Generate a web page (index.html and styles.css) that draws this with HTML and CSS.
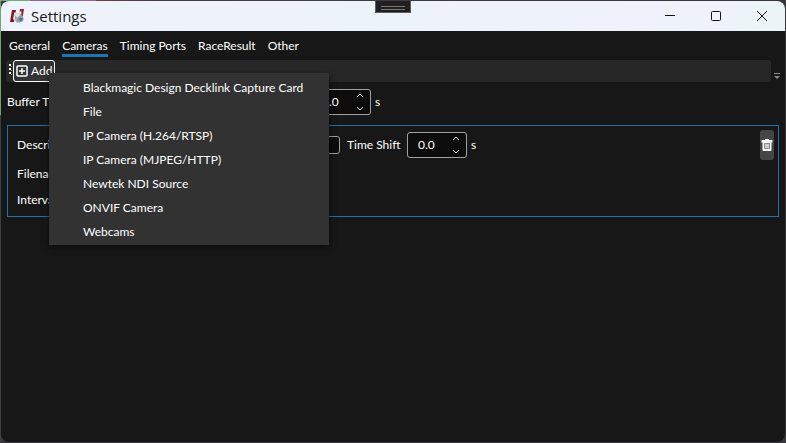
FILE: index.html
```html
<!DOCTYPE html>
<html lang="en">
<head>
<meta charset="utf-8">
<title>Settings</title>
<link rel="stylesheet" href="styles.css">
</head>
<body>
<div class="window">
  <header class="titlebar">
    <svg class="logo" width="16" height="16" viewBox="0 0 16 16" aria-hidden="true">
      <path d="M3 2h4L6.600 4.500H5.200L4 11.500h1.300L5 14H1z" fill="#86161c"/>
      <path d="M11 1H15l-1.200 7.500h-2l.8-5H10.500z" fill="#9c2226"/>
      <path d="M5.500 7l2.500-2 4 1 2 4-2 4-4 1-2-3z" fill="#a9adb2"/>
      <path d="M5.500 7l2.500-2 3 1-2 4z" fill="#e4e5e6"/>
      <circle cx="11.500" cy="11" r="3" fill="#8b9aa7"/>
      <circle cx="11.800" cy="11.200" r="1.500" fill="#3c7298"/>
    </svg>
    <h1 class="title">Settings</h1>
    <div class="caption">
      <button class="caption-button" aria-label="Minimize"><svg width="12" height="12" viewBox="0 0 12 12"><path d="M1 5.500h10"/></svg></button>
      <button class="caption-button" aria-label="Maximize"><svg width="12" height="12" viewBox="0 0 12 12"><rect x="1.500" y="1.500" width="9" height="9" rx="1"/></svg></button>
      <button class="caption-button" aria-label="Close"><svg width="12" height="12" viewBox="0 0 12 12"><path d="M1 1l10 10M11 1L1 11"/></svg></button>
    </div>
  </header>
  <button class="handle" aria-label="Show toolbar"></button>

  <nav class="tabs" role="tablist">
    <button class="tab" role="tab">General</button>
    <button class="tab tab-active" role="tab" aria-selected="true">Cameras</button>
    <button class="tab" role="tab">Timing Ports</button>
    <button class="tab" role="tab">RaceResult</button>
    <button class="tab" role="tab">Other</button>
  </nav>

  <main>
    <div class="toolbar-row">
      <div class="toolbar">
        <svg class="grip" width="4" height="14" viewBox="0 0 4 14" aria-hidden="true"><path d="M0 0h2v2H0zM0 4h2v2H0zM0 8h2v2H0z" fill="#fff"/><path d="M2 2h1v1H2zM2 6h1v1H2zM2 10h1v1H2z" fill="#999"/></svg>
        <div class="add-wrap">
          <button class="add" aria-haspopup="menu" aria-expanded="true">
            <svg width="12" height="12" viewBox="0 0 12 12" aria-hidden="true"><rect x="1" y="1" width="10" height="10" rx="1" fill="none" stroke="#fff" stroke-width="1.500"/><path d="M6 3v6M3 6h6" stroke="#fff" stroke-width="1.500"/></svg>
            Add
          </button>
          <div class="menu" role="menu">
            <button class="menu-item" role="menuitem">Blackmagic Design Decklink Capture Card</button>
            <button class="menu-item" role="menuitem">File</button>
            <button class="menu-item" role="menuitem">IP Camera (H.264/RTSP)</button>
            <button class="menu-item" role="menuitem">IP Camera (MJPEG/HTTP)</button>
            <button class="menu-item" role="menuitem">Newtek NDI Source</button>
            <button class="menu-item" role="menuitem">ONVIF Camera</button>
            <button class="menu-item" role="menuitem">Webcams</button>
          </div>
        </div>
      </div>
      <svg class="overflow" width="8" height="8" viewBox="0 0 8 8" aria-hidden="true"><path d="M1 1h6v1H1zM1 4h6L4 7z" fill="#8a8a8a"/></svg>
    </div>

    <div class="buffer-row">
      <label class="buffer-label" for="buffer">Buffer Time</label>
      <span class="spinner">
        <input id="buffer" type="text" value="5.0">
        <svg width="8" height="18" viewBox="0 0 8 18" aria-hidden="true"><path d="M1 4l3-3 3 3M1 14l3 3 3-3"/></svg>
      </span>
      <span>s</span>
    </div>

    <section class="camera">
      <div class="camera-row camera-main">
        <label class="field-label" for="description">Description</label>
        <input id="description" class="textbox" type="text">
        <label class="shift-label" for="shift">Time Shift</label>
        <span class="spinner">
          <input id="shift" type="text" value="0.0">
          <svg width="8" height="18" viewBox="0 0 8 18" aria-hidden="true"><path d="M1 4l3-3 3 3M1 14l3 3 3-3"/></svg>
        </span>
        <span>s</span>
        <button class="delete" aria-label="Delete camera">
          <svg width="12" height="14" viewBox="0 0 12 14" aria-hidden="true"><path d="M4 1h4v1h3.500v2.500h-1V12a1 1 0 0 1-1 1h-7a1 1 0 0 1-1-1V4.500h-1V2H4z" fill="#fff"/><path d="M3.500 5.500h5v5h-5z" fill="#ccc" stroke="#888"/></svg>
        </button>
      </div>
      <div class="camera-row">Filename</div>
      <div class="camera-row">Interval</div>
    </section>
  </main>
</div>
</body>
</html>
```
FILE: styles.css
```css
* {
  box-sizing: border-box;
}

body {
  margin: 0;
  padding: 1px;
  min-height: 100vh;
  display: flex;
  background: linear-gradient(to right, #78a978 0, #78a978 30px, #8f669c 30px, #8f669c 96px, #773d48 96px, #443c44 150px, #38363a) top / 100% 1px no-repeat,
    linear-gradient(#75a073 0, #75a073 115px, #3c3e40 115px) left / 1px 100% no-repeat,
    #38383a;
  color: #fff;
  font: 12px/16px Lato, "Open Sans", sans-serif;
}

button,
input {
  margin: 0;
  padding: 0;
  border: 0;
  background: none;
  color: inherit;
  font: inherit;
}

.window {
  position: relative;
  flex: 1;
  min-width: 0;
  overflow: hidden;
  border-radius: 8px;
  background: #171717;
}

.titlebar {
  display: flex;
  align-items: center;
  height: 30px;
  padding-left: 8px;
  background: linear-gradient(to right, #eff3fb, #edf4f9 50%, #eff2fb 80%, #ecf4f7);
  color: #1a1a1a;
}

.title {
  margin: 0 0 0 6px;
  font-family: "Open Sans", sans-serif;
  font-size: 15px;
  font-weight: 400;
  line-height: 20px;
}

.caption {
  display: flex;
  height: 100%;
  margin-left: auto;
}

.caption-button {
  display: flex;
  align-items: center;
  justify-content: center;
  width: 46px;
}

.caption-button svg {
  fill: none;
  stroke: #111;
}

.handle {
  position: absolute;
  top: -1px;
  left: 50%;
  width: 36px;
  height: 13px;
  margin-left: -18px;
  border: 1px solid #5c5c5c;
  background: linear-gradient(#777 0 1px, transparent 1px 3px, #777 3px 4px) center 5px / 24px 4px no-repeat, #202020;
}

.tabs {
  display: flex;
  gap: 12px;
  padding: 7px 8px 3px;
}

.tab {
  height: 19px;
  border-bottom: 3px solid transparent;
  line-height: 16px;
}

.tab-active {
  border-bottom-color: #1b75b0;
}

.toolbar-row {
  display: flex;
  align-items: flex-end;
  gap: 2px;
  padding: 0 4px 0 5px;
}

.toolbar {
  display: flex;
  flex: 1;
  height: 22px;
  border-radius: 3px;
  background: #272727;
}

.grip {
  margin: 4px 0 0 3px;
}

.add-wrap {
  position: relative;
}

.add {
  display: flex;
  align-items: center;
  gap: 3px;
  width: 42px;
  height: 22px;
  padding-left: 2px;
  border: 1px solid #fff;
  border-radius: 3px;
  background: #343434;
}

.overflow {
  margin-bottom: 2px;
}

.menu {
  position: absolute;
  z-index: 1;
  top: 13px;
  left: 36px;
  width: 280px;
  padding: 3px 0 1px;
  background: #323232;
  box-shadow: 0 2px 6px rgba(0, 0, 0, 0.6);
}

.menu-item {
  display: block;
  width: 100%;
  height: 24px;
  padding-left: 34px;
  text-align: left;
}

.buffer-row {
  display: flex;
  align-items: center;
  gap: 4px;
  padding: 7px 6px 10px;
}

.buffer-label {
  width: 300px;
}

.spinner {
  display: flex;
  align-items: center;
  width: 60px;
  height: 26px;
  padding: 0 6px 0 10px;
  border: 1px solid #a0a0a0;
  border-radius: 3px;
  background: #0c0c0c;
}

.spinner input {
  flex: 1;
  min-width: 0;
  width: 20px;
}

.spinner svg {
  fill: none;
  stroke: #ddd;
}

.camera {
  margin: 0 6px;
  padding: 3px 4px 3px 9px;
  border: 1px solid #2170a8;
}

.camera-row {
  display: flex;
  align-items: center;
  gap: 4px;
  height: 26px;
}

.camera-main {
  height: 32px;
}

.field-label {
  width: 99px;
}

.textbox {
  width: 220px;
  height: 18px;
  border: 1px solid #a0a0a0;
  border-radius: 3px;
  background: #0c0c0c;
}

.shift-label {
  width: 59px;
  padding-left: 3px;
  white-space: nowrap;
}

.delete {
  display: flex;
  align-items: center;
  justify-content: center;
  width: 14px;
  height: 30px;
  margin-left: auto;
  border-radius: 3px;
  background: #454545;
}

.delete svg {
  flex: none;
}
```
